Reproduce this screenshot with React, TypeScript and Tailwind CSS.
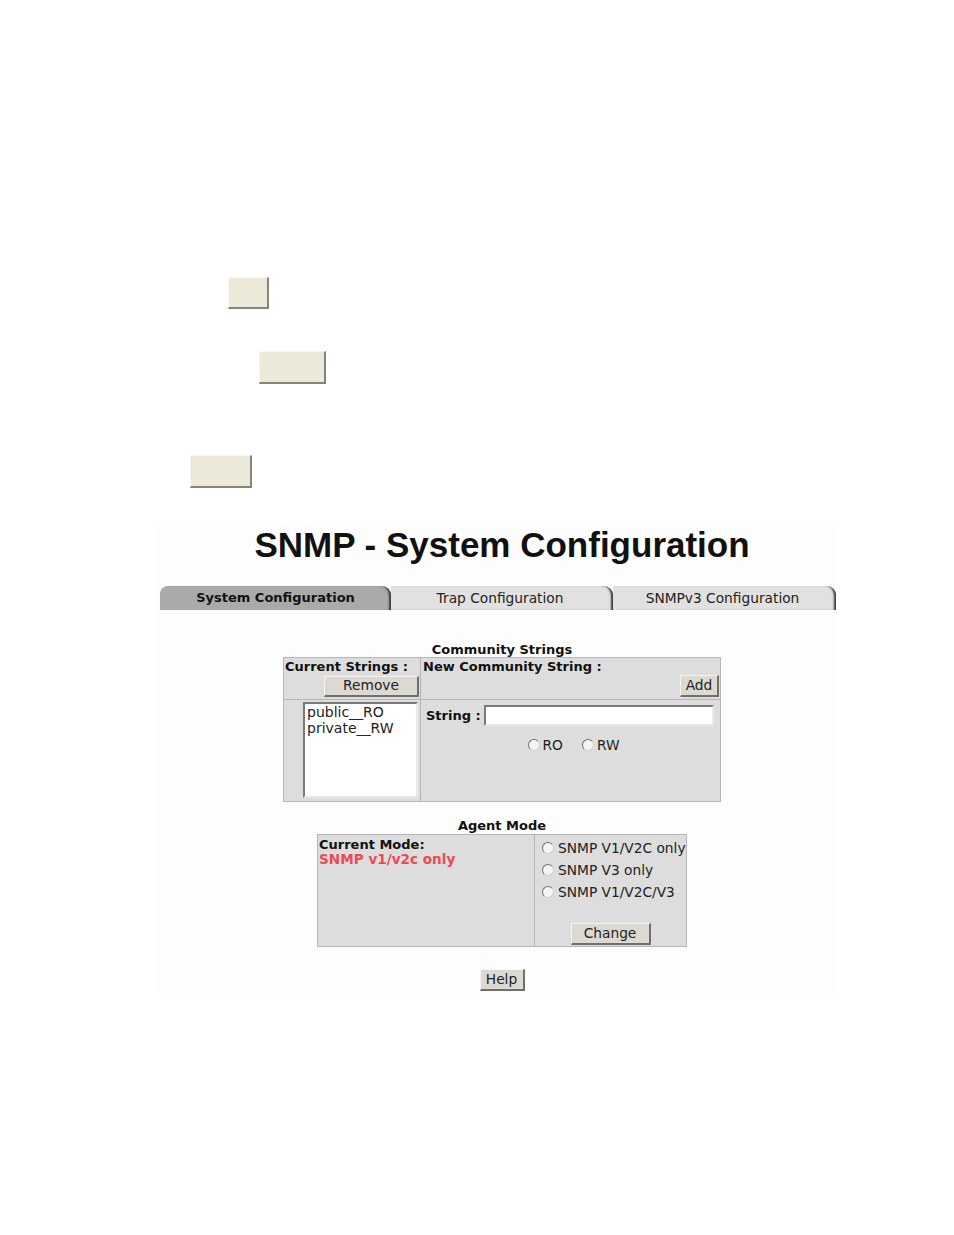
import React from "react";

const F = "font-['DejaVu_Sans',Verdana,sans-serif]";

function Radio() {
  return (
    <span className="inline-block w-[12px] h-[12px] rounded-full bg-[#f4f4f4] border border-[#cfcfcf] border-t-[#707070] border-l-[#707070] shrink-0" />
  );
}

function GrayBtn({ className, children }: { className: string; children: React.ReactNode }) {
  return (
    <div
      className={
        "flex items-center justify-center bg-[#dcd9d3] border-t border-l border-t-[#f4f4f4] border-l-[#f4f4f4] border-r-2 border-b-2 border-r-[#6f6f6f] border-b-[#6f6f6f] text-[13.75px] text-[#222] leading-none " +
        className
      }
    >
      {children}
    </div>
  );
}

export default function App() {
  return (
    <div className={"w-[954px] h-[1235px] bg-white text-[#1a1a1a] " + F}>
      <div className="pt-[277px]">
        <div className="ml-[228px] w-[41px] h-[32px] bg-[#ece9d8] border-t border-l border-[#f7f6f0] border-r-2 border-b-2 border-r-[#86847a] border-b-[#86847a]" />
        <div className="mt-[42px] ml-[259px] w-[67px] h-[33px] bg-[#ece9d8] border-t border-l border-[#f7f6f0] border-r-2 border-b-2 border-r-[#86847a] border-b-[#86847a]" />
        <div className="mt-[71px] ml-[190px] w-[62px] h-[33px] bg-[#ece9d8] border-t border-l border-[#f7f6f0] border-r-2 border-b-2 border-r-[#86847a] border-b-[#86847a]" />

        <div className="mt-[37px] ml-[157px] w-[680px] bg-[#fdfdfd] pt-[0px] pb-[2px]">
          <div className="pl-[10px] flex justify-center">
            <div className="font-['Liberation_Sans',Arial,sans-serif] font-bold text-[35px] leading-[40px] h-[40px] text-[#111]">
              SNMP - System Configuration
            </div>
          </div>

          <div className="mt-[21px] ml-[3px] w-[676px] h-[24px] flex text-[13.75px]">
            <div className="w-[231px] h-[24px] bg-[#aaaaaa] rounded-tl-[8px] rounded-tr-[9px] shadow-[inset_-3px_0_2px_-1px_#3a3a3a] flex items-center justify-center font-bold text-[13px] text-[#111]">
              System Configuration
            </div>
            <div className="w-[222px] h-[24px] bg-[#e1e1e1] rounded-tr-[9px] shadow-[inset_-3px_0_2px_-1px_#3a3a3a] flex items-center justify-center text-[#222] pr-[4px]">
              Trap Configuration
            </div>
            <div className="w-[223px] h-[24px] bg-[#e1e1e1] rounded-tr-[9px] shadow-[inset_-3px_0_2px_-1px_#3a3a3a] flex items-center justify-center text-[#222] pr-[4px]">
              SNMPv3 Configuration
            </div>
          </div>

          <div className="pl-[10px] flex flex-col items-center">
            <div className="mt-[32px] h-[15px] leading-[15px] text-[13px] font-bold text-[#111]">Community Strings</div>
            <div className="w-[438px] border border-[#b6b6b6] bg-[#dddddd] text-[13px]">
              <div className="flex h-[42px] border-b border-[#b6b6b6]">
                <div className="w-[137px] border-r border-[#b6b6b6] flex flex-col">
                  <div className="pl-[1px] pt-[1px] leading-[16px] font-bold text-[#111] whitespace-nowrap">Current Strings :</div>
                  <div className="flex justify-end pr-[1px] mt-[1px]">
                    <GrayBtn className="w-[95px] h-[21px]">Remove</GrayBtn>
                  </div>
                </div>
                <div className="flex-1 flex flex-col">
                  <div className="pl-[2px] pt-[1px] leading-[16px] font-bold text-[#111] whitespace-nowrap">New Community String :</div>
                  <div className="flex justify-end pr-[1px]">
                    <GrayBtn className="w-[39px] h-[22px]">Add</GrayBtn>
                  </div>
                </div>
              </div>
              <div className="flex h-[101px]">
                <div className="w-[137px] border-r border-[#b6b6b6] flex justify-end pr-[2px] pt-[2px]">
                  <div className="w-[115px] h-[96px] bg-white border-2 border-t-[#7a7a7a] border-l-[#7a7a7a] border-r-[#e8e8e8] border-b-[#e8e8e8] pl-[2px] leading-[16px] text-[14px] text-[#222]">
                    <div>public__RO</div>
                    <div>private__RW</div>
                  </div>
                </div>
                <div className="flex-1 flex flex-col">
                  <div className="flex items-center pl-[5px] pt-[5px]">
                    <span className="font-bold text-[#111] whitespace-nowrap">String :</span>
                    <div className="ml-[3px] w-[230px] h-[21px] bg-white border-2 border-t-[#7a7a7a] border-l-[#7a7a7a] border-r-[#e8e8e8] border-b-[#e8e8e8]" />
                  </div>
                  <div className="mt-[11px] h-[16px] flex items-center justify-center pl-[6px] text-[13.75px] text-[#222]">
                    <Radio />
                    <span className="ml-[3px]">RO</span>
                    <span className="ml-[19px] flex"><Radio /></span>
                    <span className="ml-[3px]">RW</span>
                  </div>
                </div>
              </div>
            </div>

            <div className="mt-[16px] h-[16px] leading-[16px] text-[13px] font-bold text-[#111]">Agent Mode</div>
            <div className="w-[370px] h-[113px] border border-[#b6b6b6] bg-[#dddddd] text-[13px] flex">
              <div className="w-[217px] border-r border-[#b6b6b6] pl-[1px] pt-[2px]">
                <div className="leading-[15px] font-bold text-[#111]">Current Mode:</div>
                <div className="leading-[15px] font-bold text-[13.6px] text-[#ef4a52]">SNMP v1/v2c only</div>
              </div>
              <div className="flex-1 flex flex-col pt-[2px] text-[13.75px] text-[#222]">
                <div className="h-[22px] flex items-center pl-[7px] whitespace-nowrap">
                  <Radio />
                  <span className="ml-[4px]">SNMP V1/V2C only</span>
                </div>
                <div className="h-[22px] flex items-center pl-[7px] whitespace-nowrap">
                  <Radio />
                  <span className="ml-[4px]">SNMP V3 only</span>
                </div>
                <div className="h-[22px] flex items-center pl-[7px] whitespace-nowrap">
                  <Radio />
                  <span className="ml-[4px]">SNMP V1/V2C/V3</span>
                </div>
                <div className="mt-[20px] flex justify-center">
                  <GrayBtn className="w-[80px] h-[22px]">Change</GrayBtn>
                </div>
              </div>
            </div>

            <div className="mt-[22px]">
              <GrayBtn className="w-[45px] h-[22px]">Help</GrayBtn>
            </div>
          </div>
        </div>
      </div>
    </div>
  );
}
